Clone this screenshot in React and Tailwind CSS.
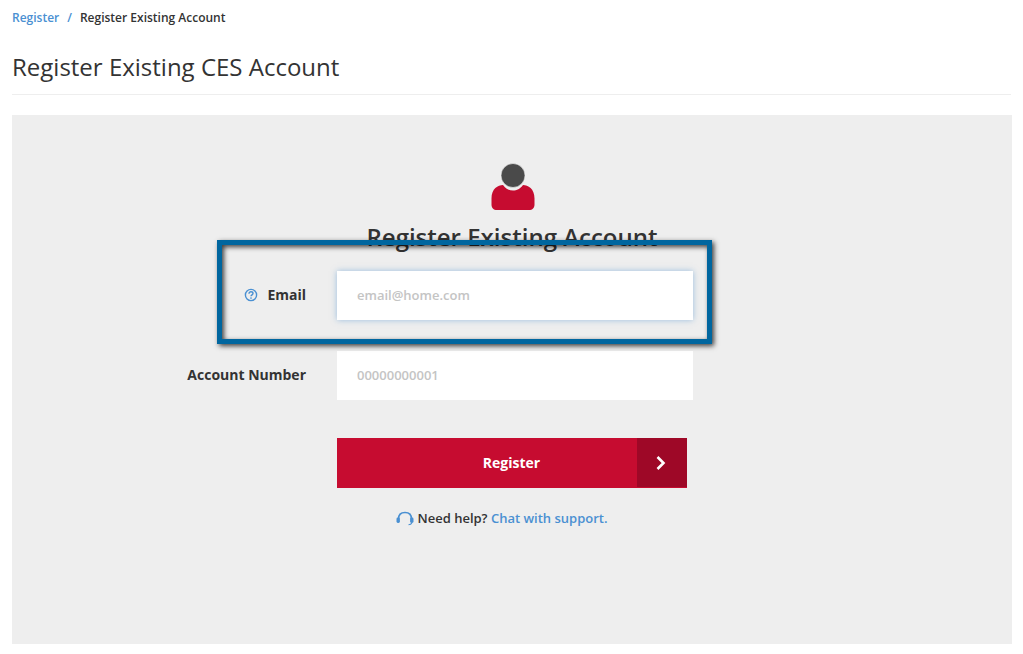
import React from "react";

function UserIcon() {
  return (
    <svg width="44" height="48" viewBox="0 0 44 48" className="ml-[1px] block">
      <path d="M12 22 C15 26 18 27.5 22 27.5 C26 27.5 29 26 32 22 C37 22 43.5 25.5 43.5 35.5 L43.5 41.5 C43.5 45 41.5 47 38 47 L6 47 C2.5 47 0.5 45 0.5 41.5 L0.5 35.5 C0.5 25.5 7 22 12 22 Z" fill="#c60c30" />
      <circle cx="22" cy="12.5" r="12" fill="#4a4a4a" stroke="#f7f7f7" strokeWidth="0.6" />
    </svg>
  );
}

function HelpIcon() {
  return (
    <svg width="14" height="14" viewBox="0 0 14 14" fill="none" stroke="#4a90d2" className="mt-[2px] block">
      <circle cx="7" cy="7" r="5.6" strokeWidth="1.4" />
      <path d="M5 5.7 C5 4.4 5.9 3.8 7 3.8 C8.1 3.8 9 4.5 9 5.5 C9 6.8 7 6.9 7 8.3" strokeWidth="1.4" />
      <circle cx="7" cy="10" r="0.85" fill="#4a90d2" stroke="none" />
    </svg>
  );
}

function HeadsetIcon() {
  return (
    <svg width="18" height="15" viewBox="0 0 18 15" fill="none" className="block">
      <path d="M2.5 8 C2.5 4 5 1.5 9 1.5 C13 1.5 15.5 4 15.5 8" stroke="#4a90d2" strokeWidth="1.7" />
      <rect x="0.5" y="6.5" width="3.4" height="5.5" rx="1.4" fill="#4a90d2" />
      <rect x="14.1" y="6.5" width="3.4" height="5.5" rx="1.4" fill="#4a90d2" />
      <path d="M15.8 12 C15.3 13.2 14 13.7 12.5 13.7" stroke="#4a90d2" strokeWidth="1.1" />
    </svg>
  );
}

export default function App() {
  return (
    <div className="relative h-[654px] w-[1023px] overflow-hidden bg-white px-3 text-[#333] [font-family:'Open_Sans',sans-serif]">
      <nav className="flex h-9 items-center gap-2 text-[12px] font-semibold">
        <span className="text-[#4a90d2]">Register</span>
        <span className="text-[#4a90d2]">/</span>
        <span>Register Existing Account</span>
      </nav>

      <h1 className="flex h-[59px] items-center border-b border-[#eeeeee] pt-[3px] text-[24px] font-normal leading-[33px]">
        Register Existing CES Account
      </h1>

      <main className="mt-5 flex h-[529px] w-[1000px] flex-col items-center bg-[#eeeeee] pt-12">
        <UserIcon />
        <h2 className="mt-[9px] text-[24px] font-semibold leading-[33px]">Register Existing Account</h2>

        <div className="mt-[18px] flex w-[1000px] flex-col">
          <div className="flex h-[49px] items-center">
            <div className="flex w-[295px] items-center justify-end gap-[9px] pb-[3px] pr-[1px] text-[14px] font-bold">
              <HelpIcon />
              <span>Email</span>
            </div>
            <input
              placeholder="email@home.com"
              className="ml-[30px] h-[49px] w-[356px] bg-white px-5 pb-[2px] text-[13px] font-semibold shadow-[0_0_6px_rgba(74,144,210,0.5)] outline-none placeholder:text-[#c4c4c4]"
            />
          </div>

          <div className="mt-[31px] flex h-[49px] items-center">
            <div className="w-[295px] pb-[3px] pr-[1px] text-right text-[14px] font-bold">Account Number</div>
            <input
              placeholder="00000000001"
              className="ml-[30px] h-[49px] w-[356px] bg-white px-5 pb-[2px] text-[13px] font-semibold outline-none placeholder:text-[#c4c4c4]"
            />
          </div>

          <div className="ml-[325px] mt-[38px] flex h-[50px] w-[350px] border-b border-[#c60c30] bg-[#c60c30] text-white">
            <div className="flex flex-1 items-center justify-center pl-[49px] text-[14px] font-bold">Register</div>
            <div className="flex w-[50px] items-center justify-center bg-[#9e0827]">
              <svg width="12" height="16" viewBox="0 0 12 16" fill="none" stroke="#ffffff" strokeWidth="2.6" className="mr-[2px] block">
                <path d="M2.5 2 L8.5 8 L2.5 14" />
              </svg>
            </div>
          </div>

          <div className="mt-[21px] flex items-center justify-center gap-[4px] pr-[21px] text-[13px] font-semibold leading-[18px]">
            <HeadsetIcon />
            <span>
              Need help? <span className="text-[#4a90d2]">Chat with support.</span>
            </span>
          </div>
        </div>
      </main>

      <div className="pointer-events-none absolute left-[217px] top-[240px] h-[104px] w-[495px] border-[5px] border-[#00669f] shadow-[2px_2px_5px_rgba(0,0,0,0.75),inset_2px_2px_5px_rgba(0,0,0,0.75)]" />
    </div>
  );
}
